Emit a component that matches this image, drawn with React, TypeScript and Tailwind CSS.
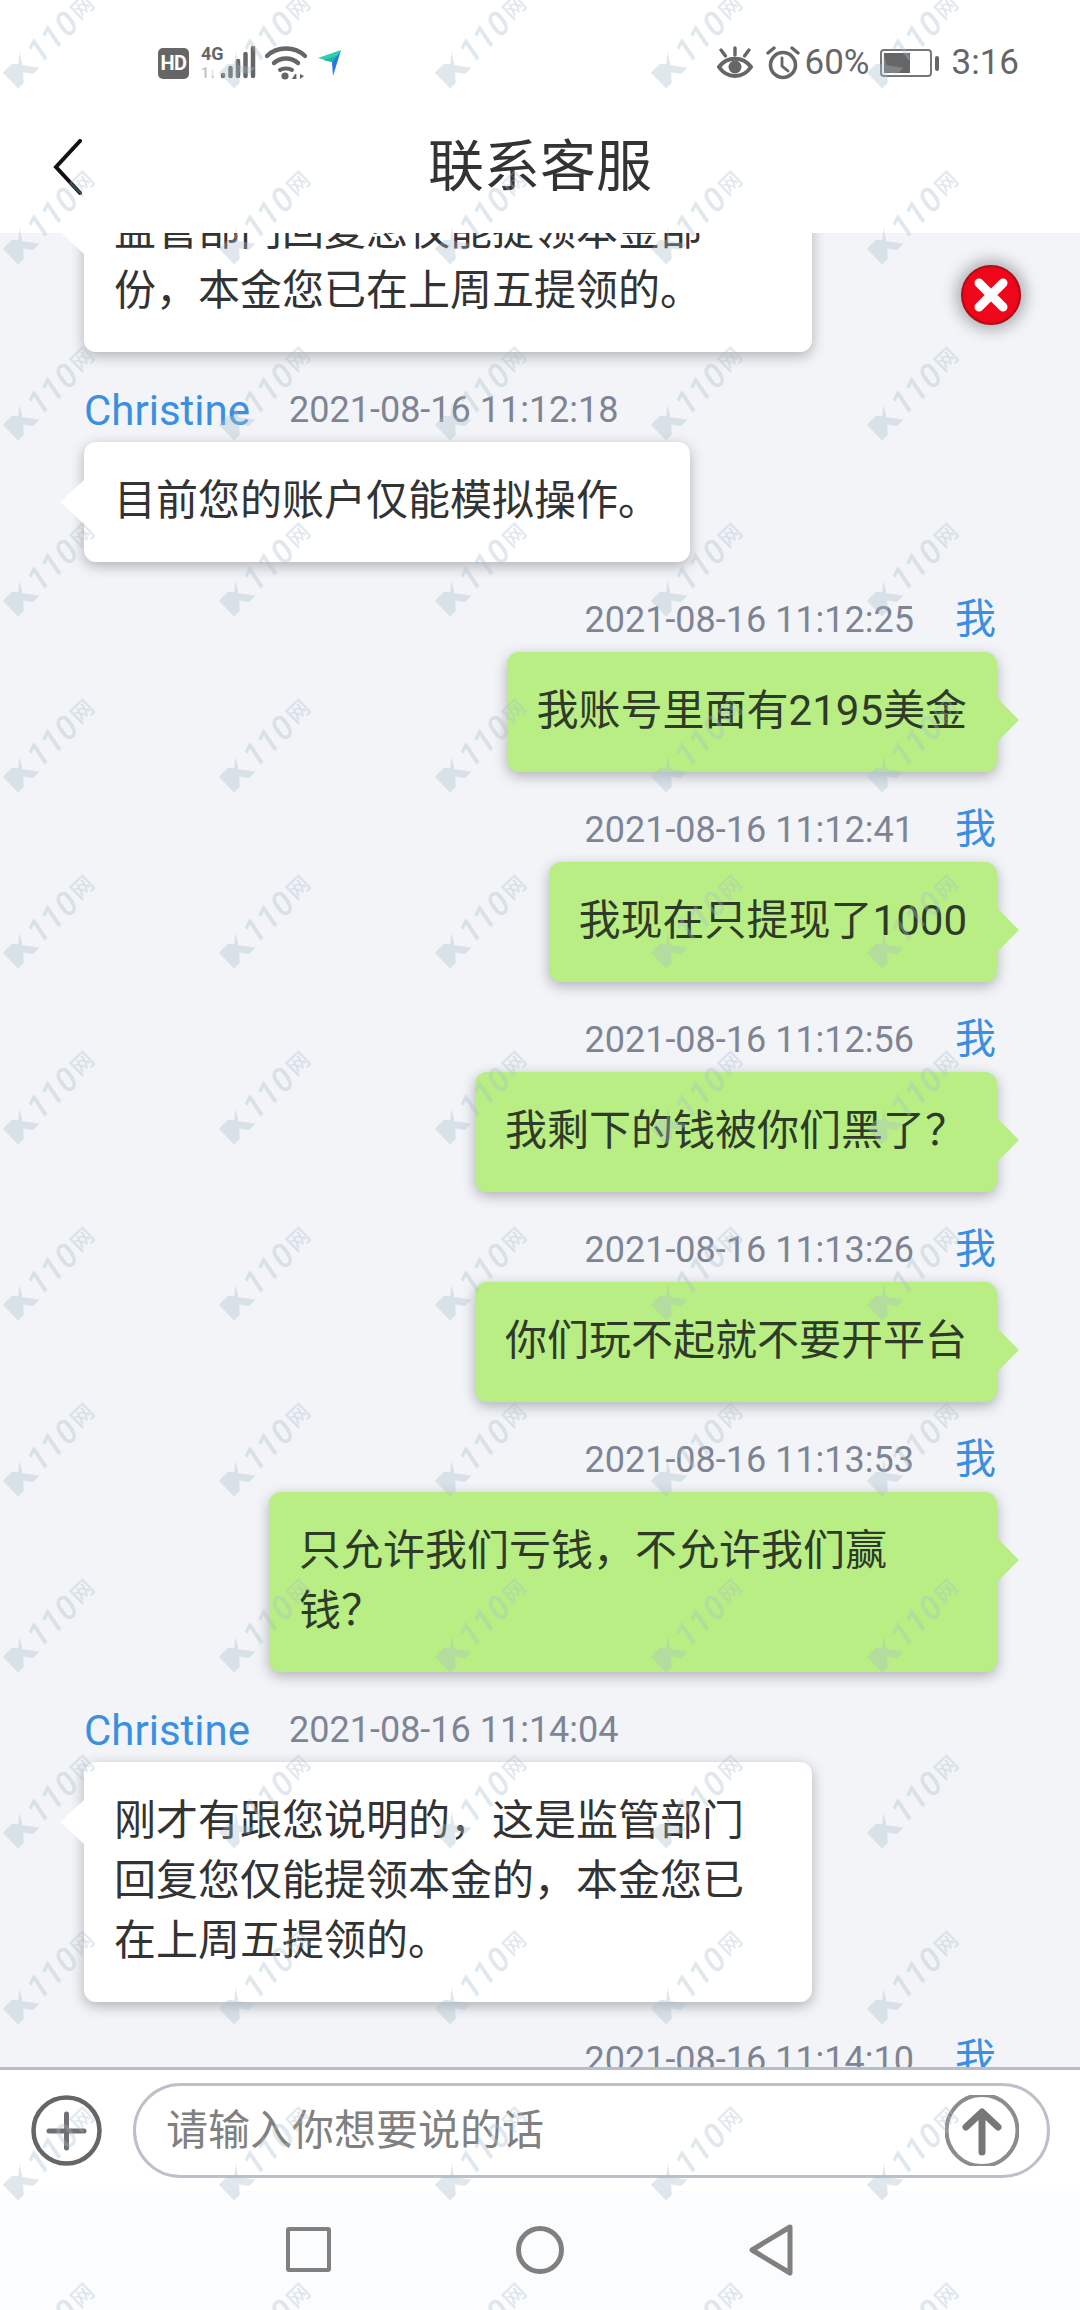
import React from "react";

type Msg = {
  me: boolean;
  time: string;
  text: string;
};

const messages: Msg[] = [
  { me: false, time: "2021-08-16 11:12:18", text: "目前您的账户仅能模拟操作。" },
  { me: true, time: "2021-08-16 11:12:25", text: "我账号里面有2195美金" },
  { me: true, time: "2021-08-16 11:12:41", text: "我现在只提现了1000" },
  { me: true, time: "2021-08-16 11:12:56", text: "我剩下的钱被你们黑了？" },
  { me: true, time: "2021-08-16 11:13:26", text: "你们玩不起就不要开平台" },
  { me: true, time: "2021-08-16 11:13:53", text: "只允许我们亏钱，不允许我们赢钱？" },
  { me: false, time: "2021-08-16 11:14:04", text: "刚才有跟您说明的，这是监管部门回复您仅能提领本金的，本金您已在上周五提领的。" },
];

const font = "font-['Roboto','Noto_Sans_CJK_SC',sans-serif]";

const Bubble = ({ me, text }: { me: boolean; text: string }) => (
  <div
    className={`relative max-w-[728px] w-fit rounded-xl px-[30px] pb-[31px] pt-[29px] text-[42px] leading-[60px] shadow-[0_4px_14px_rgba(0,0,0,0.28)] ${
      me ? "bg-[#b8ee84] text-[#2f3a28]" : "bg-white text-[#333333]"
    }`}
  >
    {me ? (
      <span className="absolute right-[-22px] top-[46px] h-0 w-0 border-y-[22px] border-l-[22px] border-y-transparent border-l-[#b8ee84]" />
    ) : (
      <span className="absolute left-[-24px] top-[38px] h-0 w-0 border-y-[22px] border-r-[24px] border-y-transparent border-r-white" />
    )}
    {text}
  </div>
);

const MessageRow = ({ me, time, text }: Msg) => {
  if (me) {
    return (
      <div className="mt-[33px] flex flex-col items-end">
        <div className="mb-[7px] flex h-[50px] items-center gap-[41px] pr-[1px]">
          <span className="text-[36px] text-[#7f8494]">{time}</span>
          <span className="text-[41px] text-[#3b8fe0]">我</span>
        </div>
        <Bubble me text={text} />
      </div>
    );
  }
  return (
    <div className="mt-[33px] flex flex-col items-start">
      <div className="mb-[7px] flex h-[50px] items-center gap-[39px]">
        <span className="text-[42px] text-[#3b8fe0]">Christine</span>
        <span className="text-[36px] text-[#7f8494]">{time}</span>
      </div>
      <Bubble me={false} text={text} />
    </div>
  );
};

const StatusLeft = () => (
  <div className="flex items-center gap-[9px]">
    <div className="flex h-[31px] w-[31px] items-center justify-center rounded-[5px] bg-[#666666] font-['Roboto',sans-serif] text-[20px] font-bold tracking-[-0.5px] text-white">
      HD
    </div>
    <svg width="58" height="34" viewBox="0 0 58 34" fill="none">
      <text x="3" y="14" fontFamily="Roboto, sans-serif" fontSize="18" fontWeight="700" fill="#666666">4G</text>
      <text x="3" y="32" fontFamily="Roboto, sans-serif" fontSize="14" fontWeight="700" fill="#c4c4c4">1↓</text>
      <g stroke="#666666" strokeWidth="4.5" strokeLinecap="round">
        <path d="M25 29v1" />
        <path d="M32.5 22v8" />
        <path d="M40 15v15" />
        <path d="M47.5 8v22" />
        <path d="M55 2v28" />
      </g>
    </svg>
    <svg width="42" height="34" viewBox="0 0 42 34" fill="none">
      <g stroke="#666666" strokeWidth="4.4" strokeLinecap="round">
        <path d="M2 10c10-10 28-10 38 0" />
        <path d="M9 17c7-6 17-6 24 0" />
      </g>
      <path d="M15 24c3-2 9-2 12 0" stroke="#666666" strokeWidth="4" strokeLinecap="round" />
      <circle cx="20" cy="30" r="3.6" fill="#666666" />
      <path d="M27 33l3-5h1.4v5zM35 28v5l4-3z" fill="#666666" />
    </svg>
    <svg width="24" height="28" viewBox="0 0 24 28" className="ml-[2px]">
      <path d="M0 9L23 1L14 13z" fill="#2ccfb0" />
      <path d="M23 1L14 13L15 27z" fill="#1e78e8" />
      <path d="M5 11l9 2l5-6z" fill="#19b6a0" />
    </svg>
  </div>
);

const StatusRight = () => (
  <div className="flex items-center text-[35px] text-[#666666]">
    <svg width="36" height="34" viewBox="0 0 36 34" fill="none" className="mr-[13px]">
      <path d="M2 21c8-11 24-11 32 0c-8 12-24 12-32 0z" stroke="#666666" strokeWidth="4" />
      <circle cx="18" cy="21" r="6.5" fill="#666666" />
      <path d="M18 2v7M4 4l4.5 6M32 4l-4.5 6" stroke="#666666" strokeWidth="3.4" strokeLinecap="round" />
    </svg>
    <svg width="34" height="34" viewBox="0 0 34 34" fill="none" className="mr-[5px]">
      <circle cx="17" cy="19" r="12.5" stroke="#666666" strokeWidth="3.6" />
      <path d="M16 12v8l6 5" stroke="#666666" strokeWidth="2.8" strokeLinecap="round" />
      <path d="M2 7l6-5M32 7l-6-5" stroke="#666666" strokeWidth="3.4" strokeLinecap="round" />
    </svg>
    <span>60%</span>
    <div className="ml-[10px] flex items-center gap-[3px]">
      <div className="h-[28px] w-[52px] rounded-[4px] border-2 border-[#777777] p-[2px]">
        <div className="h-full w-[60%] bg-[#666666]" />
      </div>
      <div className="h-[15px] w-[4px] rounded-sm bg-[#666666]" />
    </div>
    <span className="ml-[13px]">3:16</span>
  </div>
);

const Watermark = () => (
  <div className="flex h-[176px] w-[216px] items-center justify-center">
    <div className="flex -rotate-[44deg] items-center gap-[2px] whitespace-nowrap text-[#a9bfcc] opacity-35">
      <svg width="30" height="26" viewBox="0 0 26 22">
        <path d="M0 3h11l4 4l8-7l-6 10l9 12h-8l-5-7l-6 7h-7z" fill="#a9bfcc" />
      </svg>
      <span className="font-['Roboto',sans-serif] text-[33px] font-medium italic tracking-[1px]">110</span>
      <span className="text-[22px] font-medium">网</span>
    </div>
  </div>
);

const App = () => {
  return (
    <div className={`relative flex h-[2310px] w-[1080px] flex-col overflow-hidden bg-white ${font}`}>
      {/* header */}
      <header className="h-[233px] shrink-0 bg-white">
        <div className="flex h-[126px] items-center justify-between pl-[158px] pr-[61px]">
          <StatusLeft />
          <StatusRight />
        </div>
        <div className="relative flex h-[82px] items-center justify-center text-[56px] text-[#333333]">
          <svg width="30" height="56" viewBox="0 0 30 56" fill="none" className="absolute left-[53px] top-[13px]">
            <path d="M27 2L3 28l24 26" stroke="#111111" strokeWidth="4" strokeLinecap="round" />
          </svg>
          联系客服
        </div>
      </header>

      {/* chat */}
      <main className="relative min-h-0 flex-1 overflow-hidden bg-[#f2f4f8] pl-[84px] pr-[83px]">
        <div className="mt-[-61px]">
          <Bubble me={false} text="监管部门回复您仅能提领本金部份，本金您已在上周五提领的。" />
        </div>
        {messages.map((m) => (
          <MessageRow key={m.time} {...m} />
        ))}
        <MessageRow me time="2021-08-16 11:14:10" text="" />
      </main>

      {/* floating close */}
      <div className="absolute left-[961px] top-[265px] flex h-[60px] w-[60px] items-center justify-center rounded-full border-[2px] border-[#b00d12] bg-[#f0061a] shadow-[0_0_16px_4px_rgba(0,0,0,0.32)]">
        <svg width="36" height="36" viewBox="0 0 36 36" fill="none">
          <path d="M6 6l24 24M30 6L6 30" stroke="white" strokeWidth="9" strokeLinecap="round" />
        </svg>
      </div>

      {/* input */}
      <div className="flex h-[124px] shrink-0 items-center gap-[31px] border-t-[3px] border-[#b9bdc6] bg-white pl-[31px] pr-[30px]">
        <svg width="71" height="71" viewBox="0 0 71 71" fill="none" className="shrink-0">
          <circle cx="35.5" cy="35.5" r="33" stroke="#666666" strokeWidth="4.5" />
          <path d="M18 36h35M35.5 19v34" stroke="#707070" strokeWidth="5" strokeLinecap="round" />
        </svg>
        <div className="flex h-[95px] flex-1 items-center justify-between rounded-full border-[3px] border-[#bcc0c8] pl-[30px] pr-[28px]">
          <span className="text-[42px] text-[#808080]">请输入你想要说的话</span>
          <svg width="74" height="71" viewBox="0 0 74 71" fill="none">
            <circle cx="37" cy="35.5" r="35.5" stroke="#8c8c8c" strokeWidth="4" />
            <path d="M37 57V19M21 32l16-15l16 15" stroke="#777777" strokeWidth="7" strokeLinecap="round" strokeLinejoin="round" />
          </svg>
        </div>
      </div>

      {/* android nav */}
      <nav className="flex h-[119px] shrink-0 items-center justify-center gap-[185px] bg-[#fbfcfd] pb-[2px] pr-[1px]">
        <div className="h-[45px] w-[45px] rounded-[3px] border-[4px] border-[#808080]" />
        <div className="h-[48px] w-[48px] rounded-full border-[5px] border-[#808080]" />
        <svg width="44" height="52" viewBox="0 0 44 52" fill="none">
          <path d="M41 3L3 26l38 23z" stroke="#808080" strokeWidth="5" strokeLinejoin="round" />
        </svg>
      </nav>

      {/* watermark */}
      <div className="pointer-events-none absolute left-[-58px] top-[-48px] grid w-[1296px] grid-cols-6">
        {Array.from({ length: 84 }).map((_, i) => (
          <Watermark key={i} />
        ))}
      </div>
    </div>
  );
};

export default App;
